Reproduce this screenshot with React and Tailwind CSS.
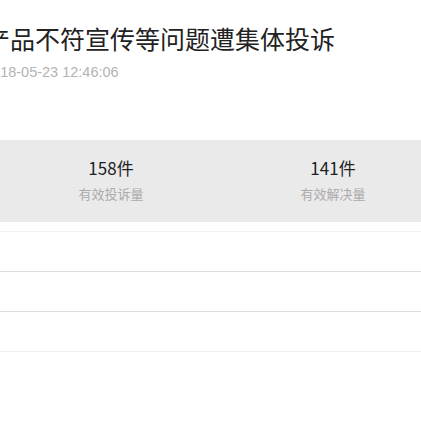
export default function App() {
  const stats = [
    { value: '158件', label: '有效投诉量' },
    { value: '141件', label: '有效解决量' },
  ]

  return (
    <div
      className="w-[421px] h-[421px] overflow-hidden bg-white"
      style={{ fontFamily: '"Noto Sans CJK SC", "Liberation Sans", sans-serif' }}
    >
      <div className="pt-[21px] whitespace-nowrap">
        <h1 className="-ml-[15px] text-[25px] leading-[34px] font-normal text-[#222]">产品不符宣传等问题遭集体投诉</h1>
        <div className="-ml-[16px] mt-[7px] text-[14.5px] leading-[20px] text-[#b3b3b3] font-['Liberation_Sans',sans-serif]">
          2018-05-23 12:46:06
        </div>
      </div>

      <div className="mt-[58px] h-[82px] bg-[#ebeaeb] w-[444px] grid grid-cols-2 pt-[16px]">
        {stats.map((s) => (
          <div key={s.label} className="flex flex-col items-center">
            <div className="text-[17px] leading-[24px] text-[#222]">{s.value}</div>
            <div className="mt-[4px] text-[13px] leading-[20px] text-[#ababab]">{s.label}</div>
          </div>
        ))}
      </div>

      <div className="mt-[9px] border-t border-[#f2f2f2]">
        <div className="h-[40px] border-b border-[#dedede]" />
        <div className="h-[40px] border-b border-[#dedede]" />
        <div className="h-[40px] border-b border-[#f0edf0]" />
      </div>
    </div>
  )
}
